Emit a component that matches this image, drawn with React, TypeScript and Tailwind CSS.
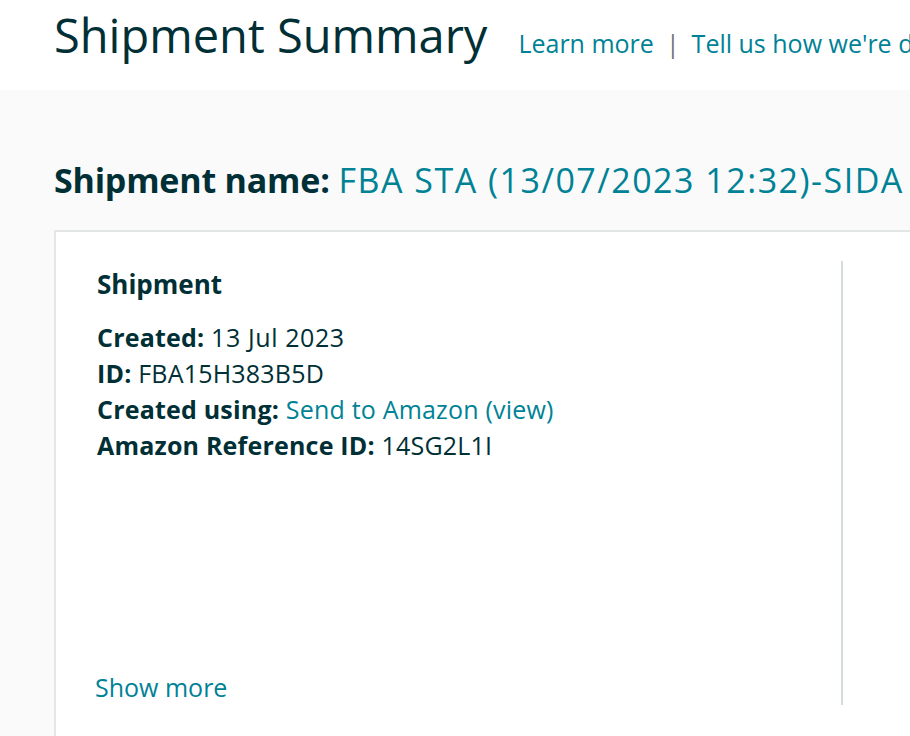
export default function App() {
  return (
    <div className="min-h-screen w-[910px] overflow-hidden bg-[#fafafa] font-['Open_Sans',sans-serif] text-[#002f36]">
      <header className="flex h-[90px] items-baseline gap-[31px] whitespace-nowrap bg-white pl-[54px] pt-[12px]">
        <h1 className="text-[47px] leading-none">Shipment Summary</h1>
        <div className="flex items-baseline gap-[12px] text-[25px] leading-none text-[#008296]">
          <span>Learn more</span>
          <span className="text-[#6f7373]">|</span>
          <span>Tell us how we're doing</span>
        </div>
      </header>

      <main className="pl-[54px] pt-[62px]">
        <h2 className="whitespace-nowrap text-[34px] leading-[56px]">
          <span className="font-bold tracking-[-0.2px]">Shipment name:</span>{' '}
          <span className="tracking-[1.5px] text-[#008296]">FBA STA (13/07/2023 12:32)-SIDA</span>
        </h2>

        <section className="mt-[22px] flex h-[520px] w-[900px] border-l-2 border-t-2 border-[#e3e6e6] bg-white pt-[29px]">
          <div className="flex h-[444px] w-[787px] flex-col border-r-2 border-[#d5dbdb] pl-[41px] pt-[3px]">
            <h3 className="text-[26px] font-bold leading-[40px]">Shipment</h3>
            <dl className="mt-[15px] text-[25px] leading-[36px] tracking-[0.2px]">
              <div>
                <dt className="inline font-bold">Created:</dt> <dd className="inline tracking-[0.6px]">13 Jul 2023</dd>
              </div>
              <div>
                <dt className="inline font-bold">ID:</dt> <dd className="inline">FBA15H383B5D</dd>
              </div>
              <div>
                <dt className="inline font-bold">Created using:</dt>{' '}
                <dd className="inline text-[#008296]">Send to Amazon (view)</dd>
              </div>
              <div>
                <dt className="inline font-bold">Amazon Reference ID:</dt> <dd className="inline">14SG2L1I</dd>
              </div>
            </dl>
            <a className="mt-auto -ml-[2px] text-[25px] leading-[36px] text-[#008296]">Show more</a>
          </div>
        </section>
      </main>
    </div>
  );
}
